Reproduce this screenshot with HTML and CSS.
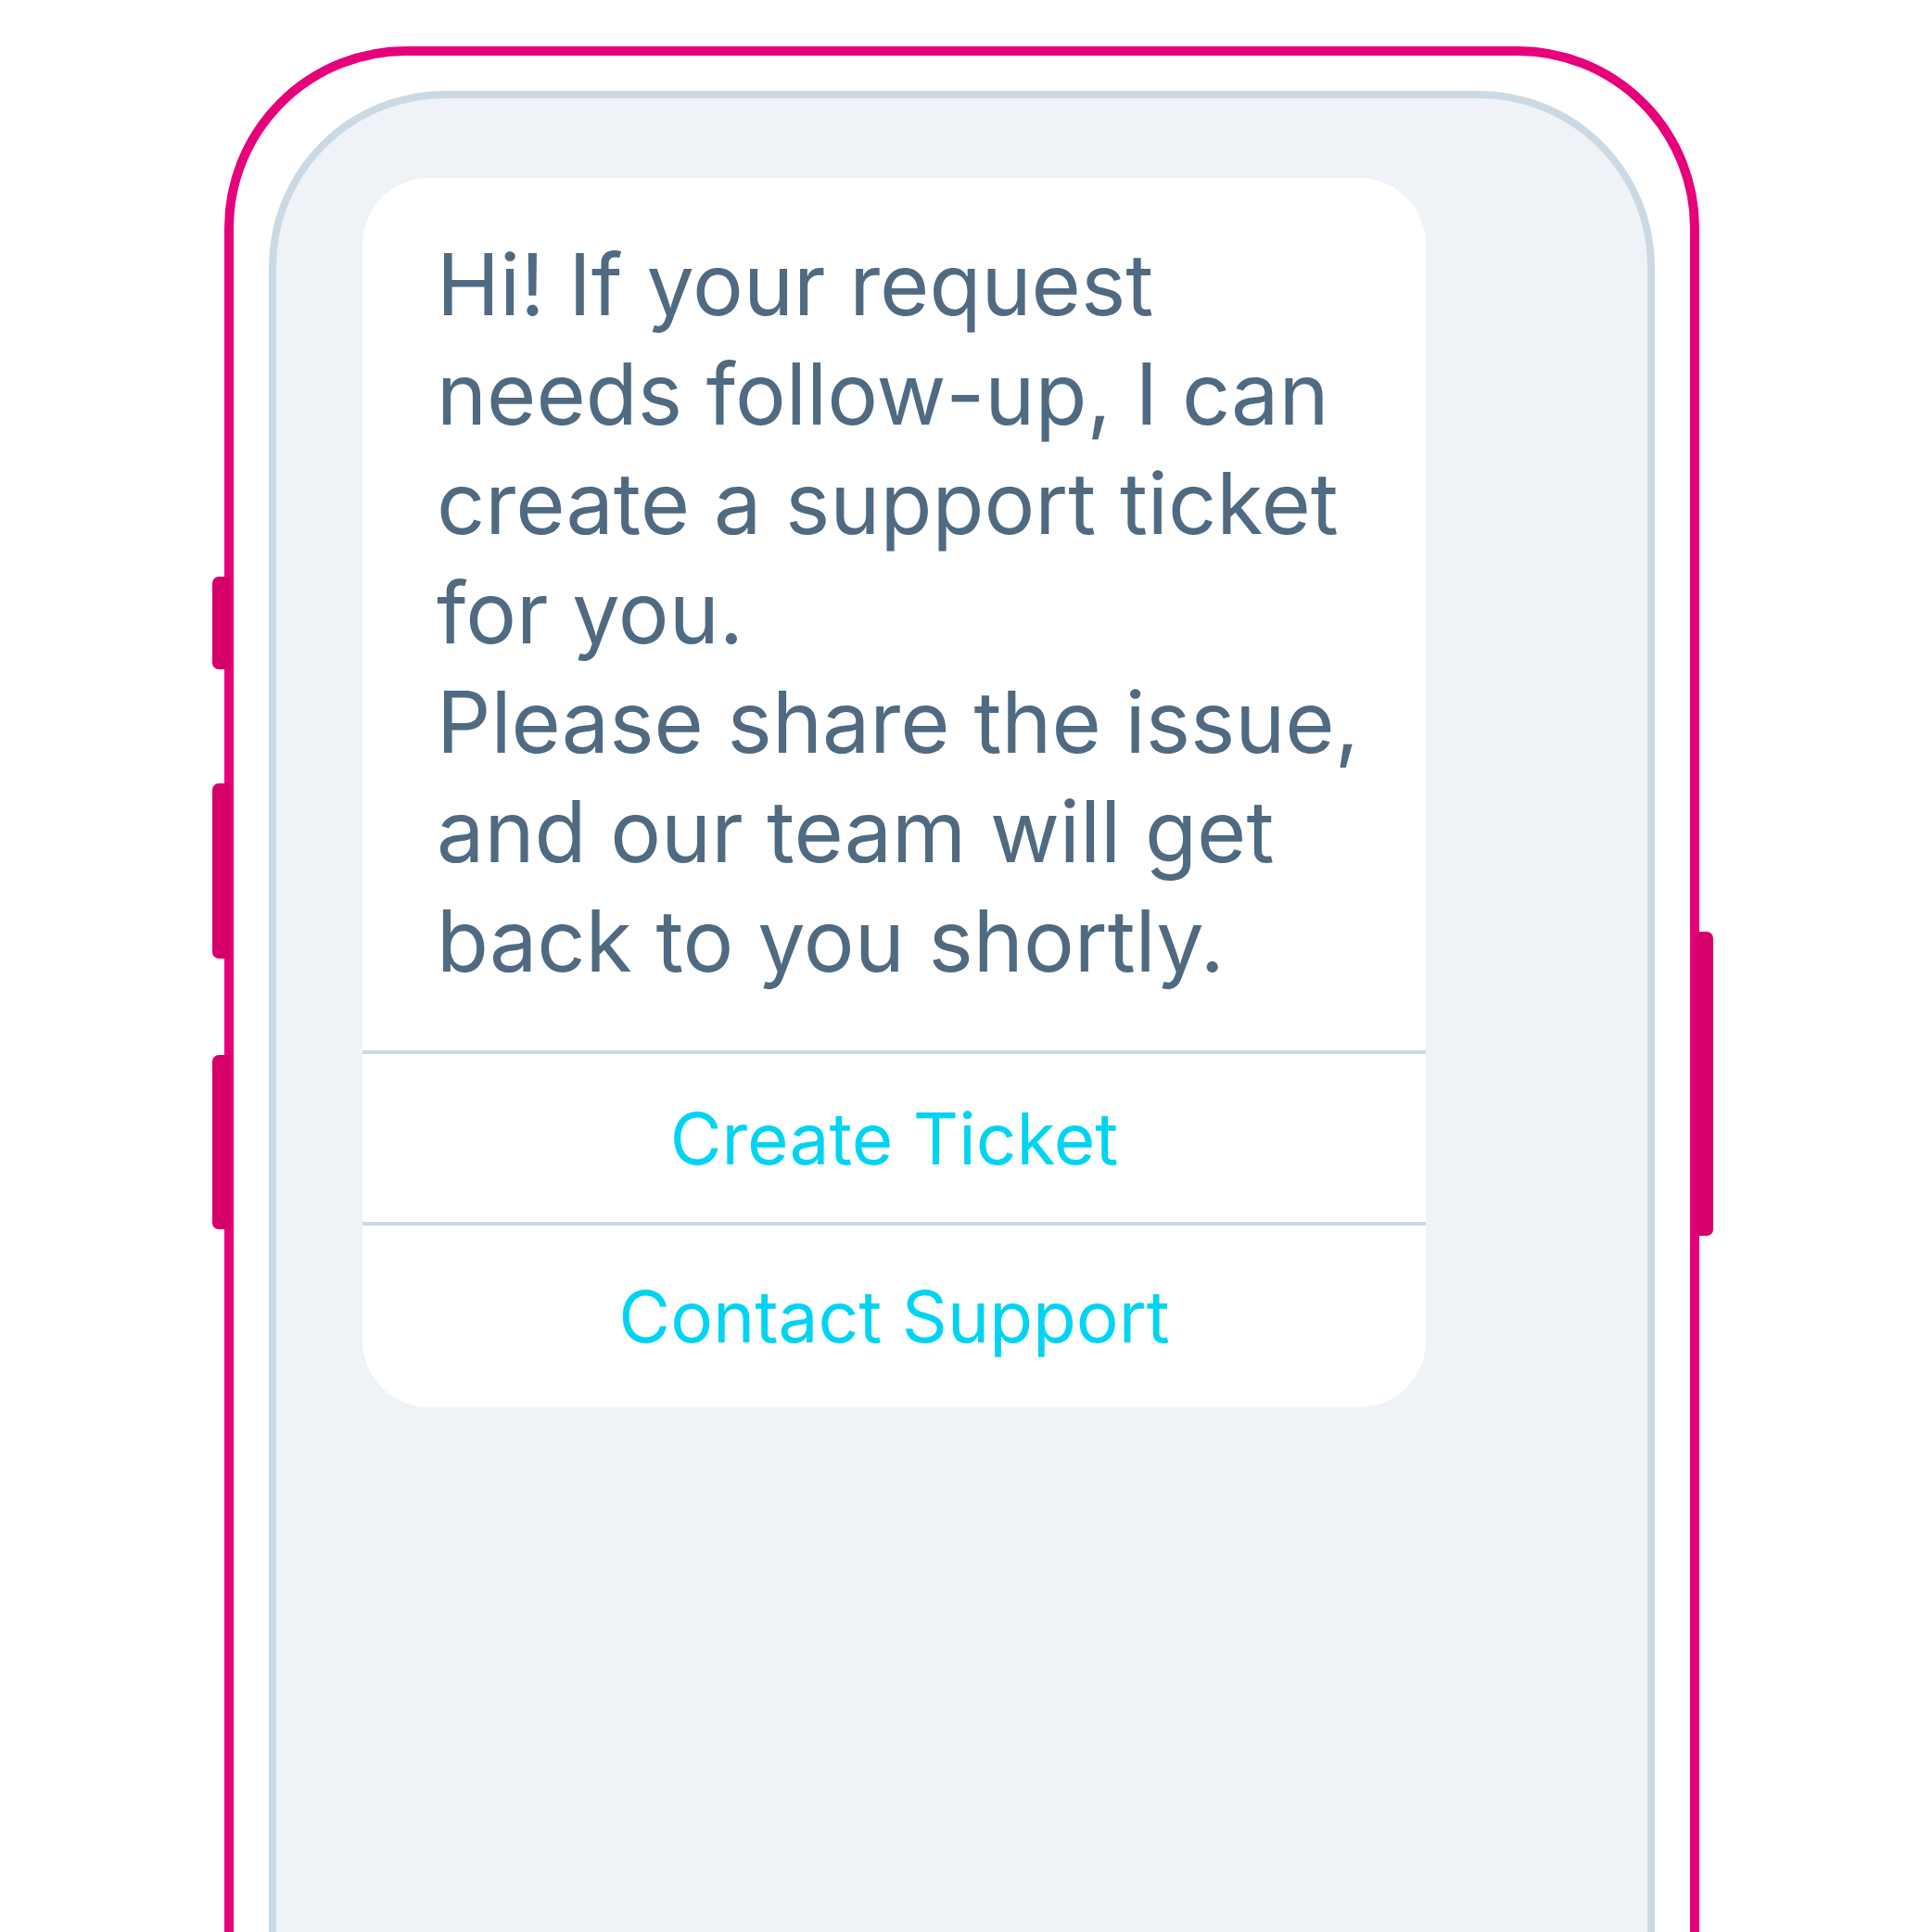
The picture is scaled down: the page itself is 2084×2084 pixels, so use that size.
FILE: index.html
```html
<!DOCTYPE html>
<html lang="en">
<head>
  <meta charset="UTF-8">
  <title>Support Chat</title>
  <link rel="stylesheet" href="styles.css">
</head>
<body>

<div class="phone">
  <div class="side-btn left small"></div>
  <div class="side-btn left mid"></div>
  <div class="side-btn left low"></div>
  <div class="side-btn right power"></div>

  <div class="screen">
    <div class="bubble">
      <div class="message">
        Hi! If your request needs follow-up, I can create a support ticket for you.<br>
        Please share the issue, and our team will get back to you shortly.
      </div>
      <div class="action first">Create Ticket</div>
      <div class="action last">Contact Support</div>
    </div>
  </div>
</div>

</body>
</html>
```

FILE: styles.css
```css
* {
  box-sizing: border-box;
  margin: 0;
  padding: 0;
}

html, body {
  overflow: hidden;
  height: 100%;
}

body {
  font-family: 'Inter', 'Noto Sans', sans-serif;
  background: #fff;
}

.phone {
  position: relative;
  margin: 50px 0 0 242px;
  width: 1591px;
  height: 2500px;
  border: 10px solid #e6007a;
  border-radius: 196px;
  padding: 38px;
  background: #fff;
}

.side-btn {
  position: absolute;
  width: 19px;
  background: #d6006a;
}

.side-btn.left {
  left: -23px;
  border-radius: 7px 0 0 7px;
}

.side-btn.small { top: 562px; height: 100px; }
.side-btn.mid { top: 785px; height: 189px; }
.side-btn.low { top: 1078px; height: 188px; }

.side-btn.right {
  right: -25px;
  width: 20px;
  border-radius: 0 7px 7px 0;
}

.side-btn.power { top: 945px; height: 328px; }

.screen {
  height: 2600px;
  border: 8px solid #cbd9e4;
  border-radius: 190px;
  background: #eff3f8;
  padding: 86px 239px 0 93px;
}

.bubble {
  background: #fff;
  border-radius: 72px;
  overflow: hidden;
}

.message {
  padding: 56px 50px 59px 80px;
  font-size: 91.5px;
  line-height: 118px;
  color: #4f6a81;
  border-bottom: 4px solid #cbd9e4;
}

.action {
  display: flex;
  align-items: center;
  justify-content: center;
  font-size: 76.5px;
  color: #00d4f2;
}

.action.first {
  height: 185px;
  border-bottom: 4px solid #cbd9e4;
}

.action.last {
  height: 196px;
}
```
